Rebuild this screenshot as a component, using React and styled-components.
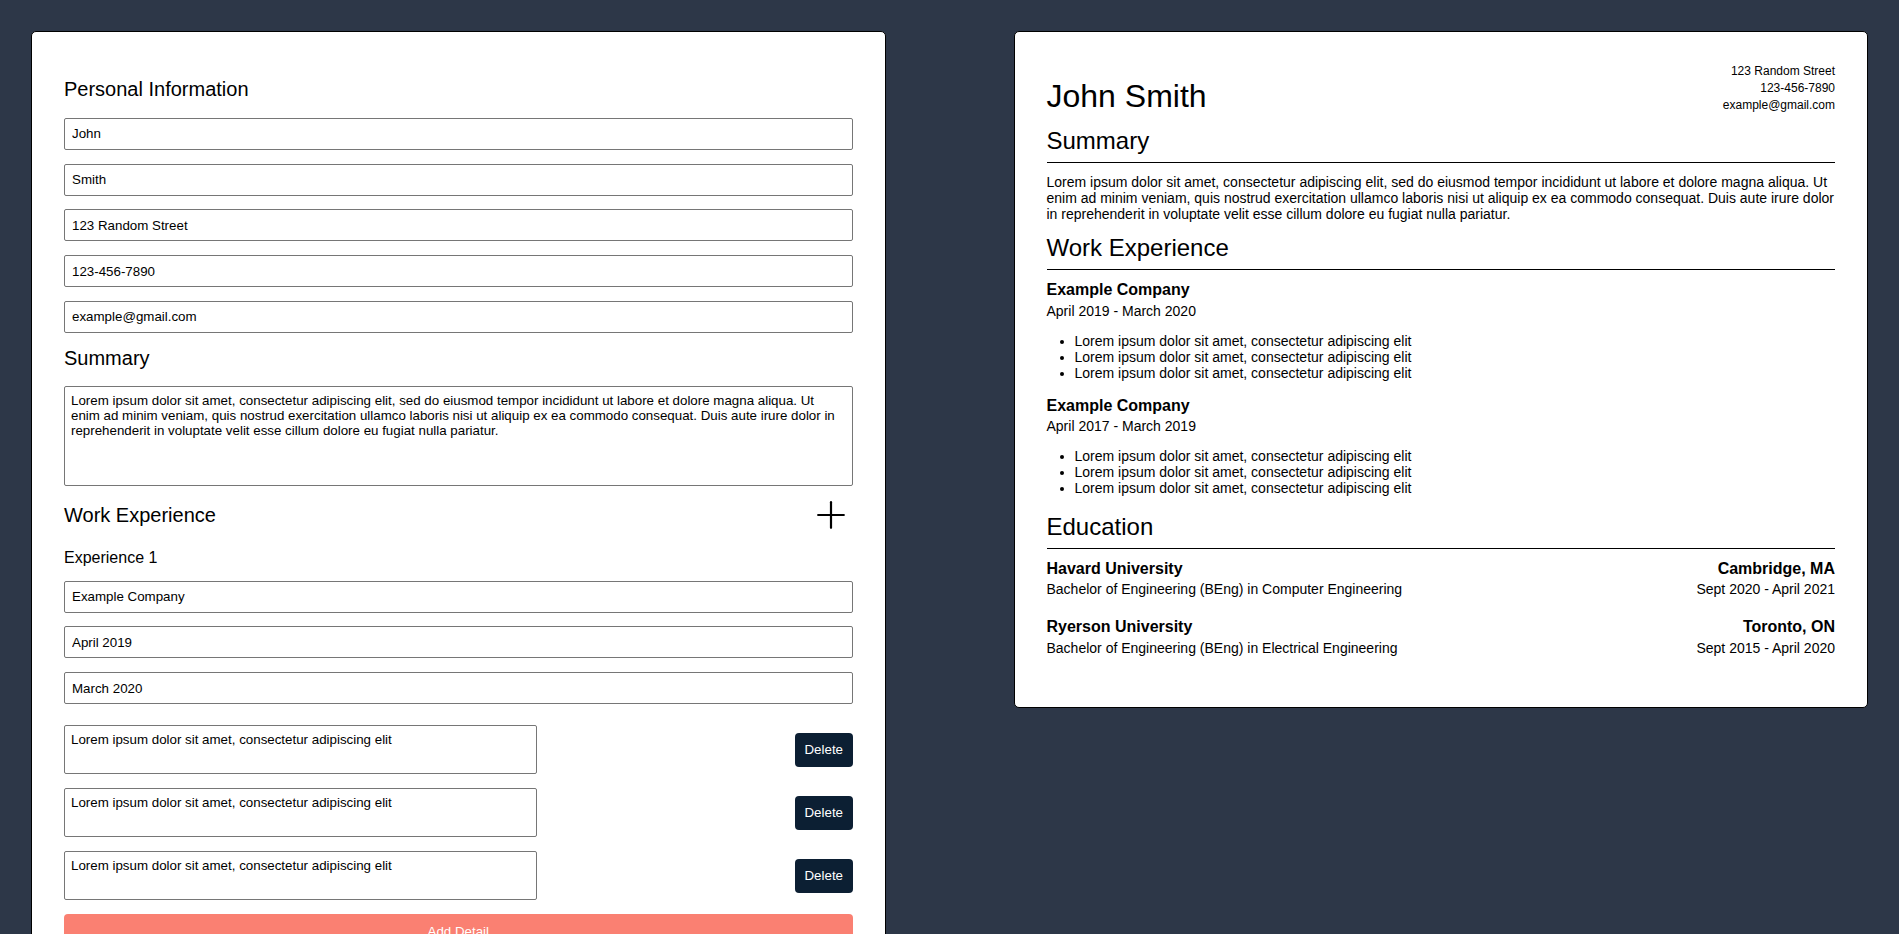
import React from "react";
import styled, { createGlobalStyle } from "styled-components";
import { Plus } from "lucide-react";

const GlobalStyle = createGlobalStyle`
  html { scrollbar-width: none; }
  html::-webkit-scrollbar { display: none; }
  *, *::before, *::after { box-sizing: border-box; }
  body {
    margin: 0;
    background: #2d3748;
    font-family: "Liberation Sans", Arial, sans-serif;
    color: #000;
  }
`;

const Page = styled.div`
  display: grid;
  grid-template-columns: 1fr 1fr;
  column-gap: 128px;
  align-items: start;
  padding: 31px;
  min-height: 100vh;
  background: #2d3748;
`;

const FormPanel = styled.section`
  background: #fff;
  border: 1px solid #000;
  border-radius: 5px;
  padding: 46px 32px 32px;
  display: flex;
  flex-direction: column;
  gap: 13.75px;
`;

const FormHeading = styled.h2`
  margin: 0 0 3px;
  font-size: 20px;
  font-weight: 400;
  line-height: normal;
`;

const HeadingRow = styled.div`
  display: flex;
  align-items: center;
  justify-content: space-between;
  height: 30px;
  & > h2 { margin: 0; }
`;

const IconButton = styled.button`
  width: 44px;
  height: 30px;
  padding: 0;
  border: none;
  background: none;
  display: flex;
  align-items: center;
  justify-content: center;
  color: #000;
  cursor: pointer;
  & svg { flex: none; }
`;

const SubHeading = styled.h3`
  margin: 5px 0 0;
  font-size: 16px;
  font-weight: 400;
  line-height: normal;
`;

const TextInput = styled.input`
  display: block;
  width: 100%;
  height: 32px;
  padding: 0 7px;
  border: 1px solid #767676;
  border-radius: 2px;
  font-family: "Liberation Sans", Arial, sans-serif;
  font-size: 13.333px;
  color: #000;
  background: #fff;
`;

const TextArea = styled.textarea`
  display: block;
  width: ${(p) => p.$width || "100%"};
  height: ${(p) => p.$height}px;
  padding: 6px;
  border: 1px solid #767676;
  border-radius: 2px;
  font-family: "Liberation Sans", Arial, sans-serif;
  font-size: 13.333px;
  line-height: normal;
  color: #000;
  background: #fff;
  resize: none;
`;

const DetailList = styled.div`
  display: flex;
  flex-direction: column;
  gap: 14px;
  margin-top: 7.5px;
`;

const DetailRow = styled.div`
  display: flex;
  align-items: center;
  justify-content: space-between;
`;

const ActionButton = styled.button`
  border: none;
  border-radius: 4px;
  padding: 9.5px;
  font-family: "Liberation Sans", Arial, sans-serif;
  font-size: 13.333px;
  line-height: normal;
  color: #fff;
  background: ${(p) => (p.$variant === "add" ? "#fa8072" : "#0c1f33")};
  width: ${(p) => (p.$variant === "add" ? "100%" : "auto")};
  cursor: pointer;
`;

const ResumePanel = styled.section`
  background: #fff;
  border: 1px solid #000;
  border-radius: 5px;
  padding: 31px 32px 32px;
`;

const ResumeHeader = styled.header`
  display: flex;
  justify-content: space-between;
  align-items: flex-end;
`;

const Name = styled.h1`
  margin: 0;
  font-size: 32px;
  font-weight: 400;
  line-height: normal;
`;

const Contact = styled.div`
  text-align: right;
  font-size: 12px;
  line-height: 17.2px;
`;

const SectionTitle = styled.h2`
  margin: ${(p) => p.$mt}px 0 11px;
  padding-bottom: 7px;
  border-bottom: 1px solid #000;
  font-size: 24px;
  font-weight: 400;
  line-height: normal;
`;

const Body = styled.p`
  margin: 0;
  font-size: 14px;
  line-height: normal;
`;

const ItemTitle = styled.h3`
  margin: 0;
  font-size: 16px;
  font-weight: 700;
  line-height: normal;
`;

const Meta = styled.p`
  margin: 3.4px 0 0;
  font-size: 14px;
  line-height: normal;
`;

const Bullets = styled.ul`
  margin: 14px 0 16.4px;
  padding-left: 28px;
  font-size: 14px;
  line-height: normal;
`;

const EduList = styled.div`
  display: flex;
  flex-direction: column;
  gap: 21.2px;
  margin-bottom: 19.5px;
`;

const EduRow = styled.div`
  display: flex;
  justify-content: space-between;
  align-items: baseline;
`;

const summary =
  "Lorem ipsum dolor sit amet, consectetur adipiscing elit, sed do eiusmod tempor incididunt ut labore et dolore magna aliqua. Ut enim ad minim veniam, quis nostrud exercitation ullamco laboris nisi ut aliquip ex ea commodo consequat. Duis aute irure dolor in reprehenderit in voluptate velit esse cillum dolore eu fugiat nulla pariatur.";

const detail = "Lorem ipsum dolor sit amet, consectetur adipiscing elit";

const experiences = [
  { company: "Example Company", from: "April 2019", to: "March 2020" },
  { company: "Example Company", from: "April 2017", to: "March 2019" },
];

const education = [
  {
    school: "Havard University",
    place: "Cambridge, MA",
    degree: "Bachelor of Engineering (BEng) in Computer Engineering",
    dates: "Sept 2020 - April 2021",
  },
  {
    school: "Ryerson University",
    place: "Toronto, ON",
    degree: "Bachelor of Engineering (BEng) in Electrical Engineering",
    dates: "Sept 2015 - April 2020",
  },
];

function ExperienceForm({ index, exp }) {
  return (
    <>
      <SubHeading>Experience {index}</SubHeading>
      <TextInput defaultValue={exp.company} />
      <TextInput defaultValue={exp.from} />
      <TextInput defaultValue={exp.to} />
      <DetailList>
        {[0, 1, 2].map((i) => (
          <DetailRow key={i}>
            <TextArea $width="60%" $height={49} defaultValue={detail} />
            <ActionButton>Delete</ActionButton>
          </DetailRow>
        ))}
      </DetailList>
      <ActionButton $variant="add">Add Detail</ActionButton>
    </>
  );
}

export default function App() {
  return (
    <>
      <GlobalStyle />
      <Page>
        <FormPanel>
          <FormHeading>Personal Information</FormHeading>
          <TextInput defaultValue="John" />
          <TextInput defaultValue="Smith" />
          <TextInput defaultValue="123 Random Street" />
          <TextInput defaultValue="123-456-7890" />
          <TextInput defaultValue="example@gmail.com" />
          <FormHeading>Summary</FormHeading>
          <TextArea $height={100} defaultValue={summary} />
          <HeadingRow>
            <FormHeading>Work Experience</FormHeading>
            <IconButton aria-label="Add experience">
              <Plus size={44} strokeWidth={1.2} />
            </IconButton>
          </HeadingRow>
          {experiences.map((exp, i) => (
            <ExperienceForm key={i} index={i + 1} exp={exp} />
          ))}
          <HeadingRow>
            <FormHeading>Education</FormHeading>
            <IconButton aria-label="Add education">
              <Plus size={44} strokeWidth={1.2} />
            </IconButton>
          </HeadingRow>
          {education.map((ed, i) => (
            <React.Fragment key={i}>
              <SubHeading>Education {i + 1}</SubHeading>
              <TextInput defaultValue={ed.school} />
              <TextInput defaultValue={ed.place} />
              <TextInput defaultValue={ed.degree} />
              <TextInput defaultValue={ed.dates} />
            </React.Fragment>
          ))}
        </FormPanel>

        <ResumePanel>
          <ResumeHeader>
            <Name>John Smith</Name>
            <Contact>
              <div>123 Random Street</div>
              <div>123-456-7890</div>
              <div>example@gmail.com</div>
            </Contact>
          </ResumeHeader>

          <SectionTitle $mt={12.6}>Summary</SectionTitle>
          <Body>{summary}</Body>

          <SectionTitle $mt={12}>Work Experience</SectionTitle>
          {experiences.map((exp, i) => (
            <div key={i}>
              <ItemTitle>{exp.company}</ItemTitle>
              <Meta>
                {exp.from} - {exp.to}
              </Meta>
              <Bullets>
                <li>{detail}</li>
                <li>{detail}</li>
                <li>{detail}</li>
              </Bullets>
            </div>
          ))}

          <SectionTitle $mt={15.4}>Education</SectionTitle>
          <EduList>
            {education.map((ed, i) => (
              <div key={i}>
                <EduRow>
                  <ItemTitle>{ed.school}</ItemTitle>
                  <ItemTitle as="span">{ed.place}</ItemTitle>
                </EduRow>
                <EduRow>
                  <Meta>{ed.degree}</Meta>
                  <Meta>{ed.dates}</Meta>
                </EduRow>
              </div>
            ))}
          </EduList>
        </ResumePanel>
      </Page>
    </>
  );
}
